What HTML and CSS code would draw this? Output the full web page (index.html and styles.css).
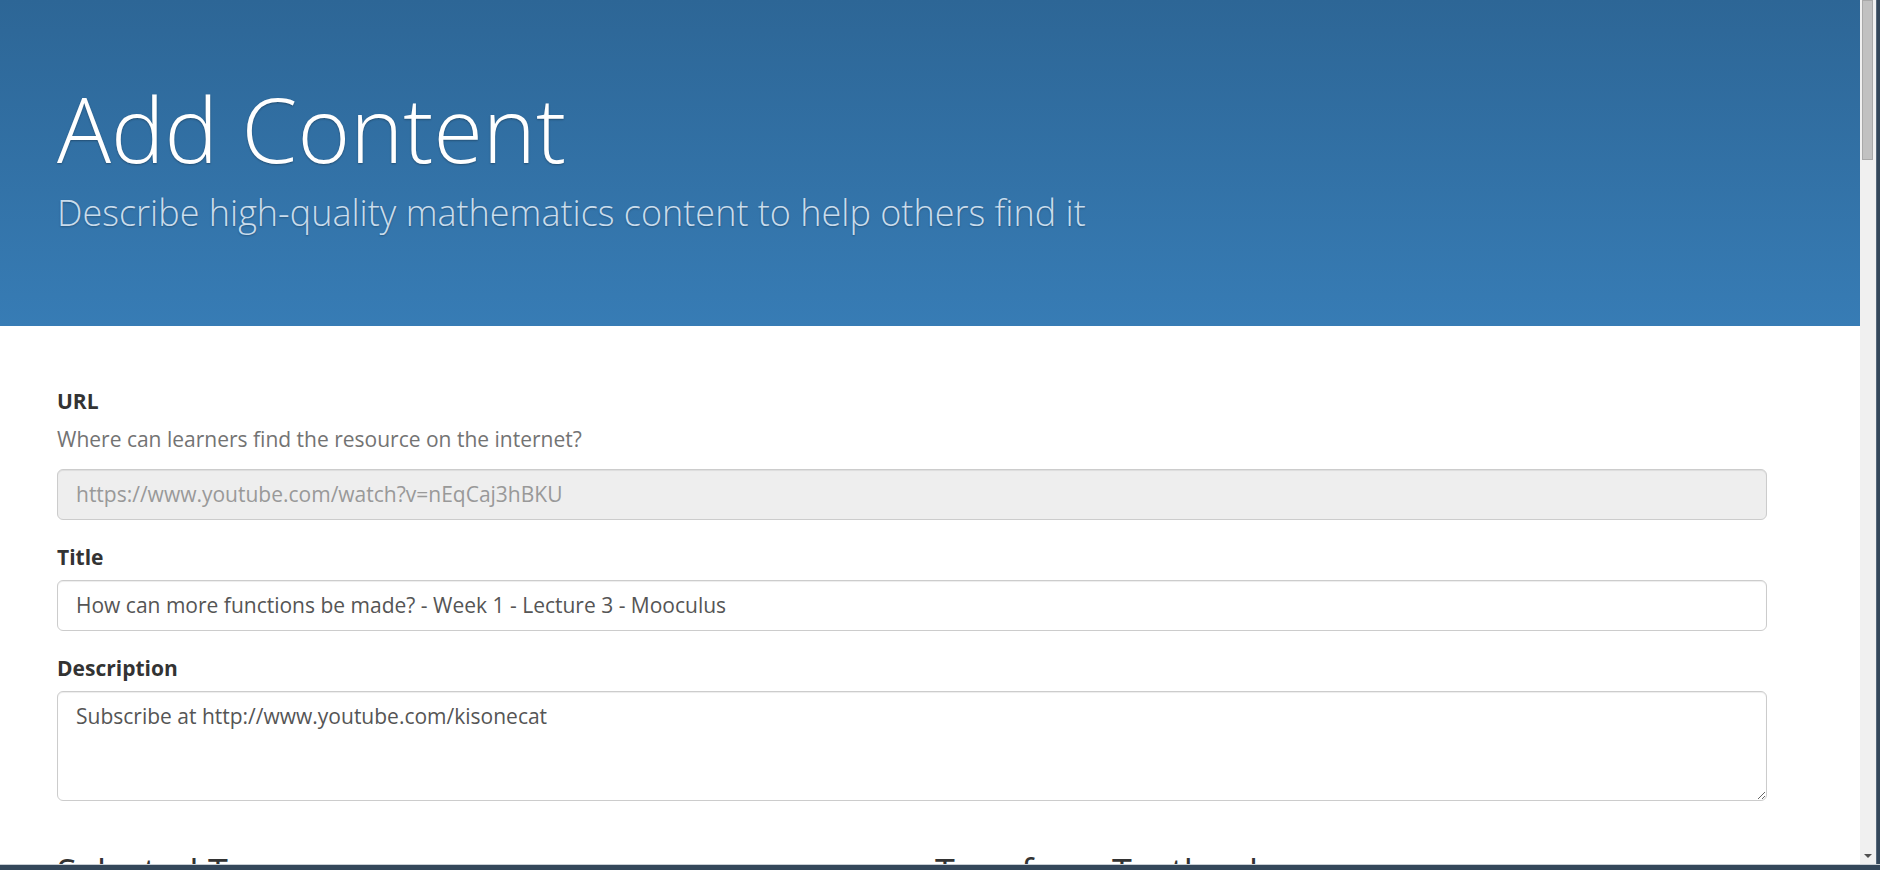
FILE: index.html
```html
<!DOCTYPE html>
<html lang="en">
<head>
<meta charset="utf-8">
<title>Add Content</title>
<link rel="stylesheet" href="styles.css">
</head>
<body>
<div class="window">
  <div class="viewport">
    <main class="page">
      <header class="hero">
        <h1 class="hero-title">Add Content</h1>
        <p class="hero-lead">Describe high-quality mathematics content to help others find it</p>
      </header>
      <form class="form">
        <div class="form-group">
          <label class="label" for="url">URL</label>
          <p class="help">Where can learners find the resource on the internet?</p>
          <input class="control" id="url" type="text" value="https://www.youtube.com/watch?v=nEqCaj3hBKU" disabled>
        </div>
        <div class="form-group">
          <label class="label" for="title">Title</label>
          <input class="control" id="title" type="text" value="How can more functions be made? - Week 1 - Lecture 3 - Mooculus">
        </div>
        <div class="form-group">
          <label class="label" for="desc">Description</label>
          <textarea class="control area" id="desc" rows="3">Subscribe at http://www.youtube.com/kisonecat</textarea>
        </div>
        <div class="columns">
          <h3 class="section-title">Selected Tags</h3>
          <h3 class="section-title">Tags from Textbook</h3>
        </div>
      </form>
    </main>
    <div class="scrollbar">
      <div class="thumb"></div>
      <div class="track"></div>
      <div class="arrow"></div>
    </div>
    <div class="frame-right"></div>
  </div>
  <div class="frame-bottom"></div>
</div>
</body>
</html>
```

FILE: styles.css
```css
html, body {
  margin: 0;
  padding: 0;
  height: 870px;
  overflow: hidden;
}

body {
  font-family: "Open Sans", "Liberation Sans", sans-serif;
  color: #333;
  background: #ffffff;
}

.window {
  display: flex;
  flex-direction: column;
  width: 1880px;
  height: 870px;
}

.viewport {
  display: flex;
  height: 864px;
  overflow: hidden;
}

.page {
  width: 1860px;
  flex: none;
  background: #fff;
  overflow: hidden;
}

.hero {
  box-sizing: border-box;
  height: 326px;
  padding: 76px 57px 0;
  background: linear-gradient(to bottom, #2d6696 0%, #377cb5 100%);
  color: #fff;
}

.hero-title {
  margin: 0 0 9.5px;
  font-weight: 300;
  font-size: 90px;
  line-height: 104px;
  text-shadow: 0 1px 2px rgba(0, 0, 0, 0.3);
}

.hero-lead {
  margin: 0;
  font-weight: 300;
  font-size: 36px;
  line-height: 45px;
  color: #c9dcec;
  text-shadow: 0 1px 2px rgba(0, 0, 0, 0.25);
}

.form {
  padding: 60px 93px 0 57px;
}

.form-group {
  margin-bottom: 22.5px;
}

.label {
  display: block;
  margin-bottom: 7.5px;
  font-weight: 700;
  font-size: 21px;
  line-height: 30px;
  color: #333;
}

.help {
  margin: 0 0 15px;
  font-size: 21px;
  line-height: 30px;
  color: #737373;
}

.control {
  display: block;
  box-sizing: border-box;
  width: 100%;
  height: 51px;
  padding: 9px 18px;
  font-family: "Open Sans", "Liberation Sans", sans-serif;
  font-size: 21px;
  line-height: 30px;
  color: #555;
  background: #fff;
  border: 1px solid #ccc;
  border-radius: 6px;
  box-shadow: inset 0 1px 1px rgba(0, 0, 0, 0.075);
  margin: 0;
}

.control:disabled {
  background: #eee;
  color: #999;
  opacity: 1;
}

.area {
  height: 110px;
  resize: vertical;
}

.columns {
  display: grid;
  grid-template-columns: 1fr 1fr;
  column-gap: 46px;
}

.section-title {
  margin: 28.5px 0 15px;
  font-weight: 500;
  font-size: 36px;
  line-height: 39.6px;
  color: #333;
}

.scrollbar {
  width: 16px;
  flex: none;
  display: flex;
  flex-direction: column;
  background: #f0f0f0;
  box-sizing: border-box;
  padding: 0 3px 0 2px;
}

.thumb {
  height: 160px;
  background: #c1c1c1;
  border: 1px solid #a9a9a9;
  box-sizing: border-box;
}

.track {
  flex: 1;
}

.arrow {
  align-self: center;
  width: 0;
  height: 0;
  margin-bottom: 6px;
  border-left: 4px solid transparent;
  border-right: 4px solid transparent;
  border-top: 4px solid #505050;
}

.frame-right {
  width: 4px;
  flex: none;
  background: #34475a;
  border-left: 1px solid #56687a;
  box-sizing: border-box;
}

.frame-bottom {
  height: 6px;
  background: #34475a;
  border-top: 1px solid #c8ced4;
  box-sizing: border-box;
}
```
